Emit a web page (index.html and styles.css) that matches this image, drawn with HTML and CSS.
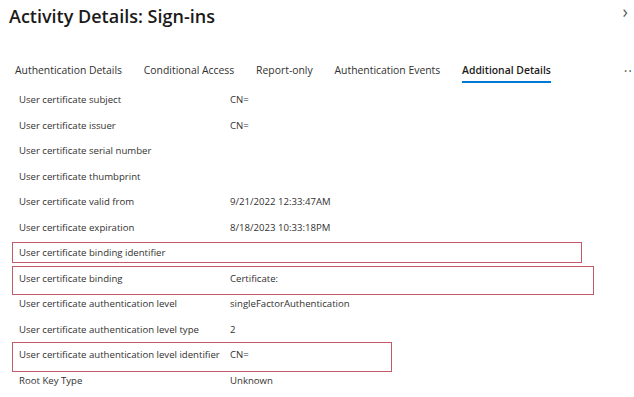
FILE: index.html
```html
<!DOCTYPE html>
<html lang="en">
<head>
  <meta charset="UTF-8">
  <title>Activity Details: Sign-ins</title>
  <link rel="stylesheet" href="styles.css">
</head>
<body>
  <header class="panel-header">
    <h1>Activity Details: Sign-ins</h1>
    <span class="close-chevron">&#x203A;</span>
  </header>

  <nav class="tab-bar">
    <a class="tab">Authentication Details</a>
    <a class="tab">Conditional Access</a>
    <a class="tab">Report-only</a>
    <a class="tab">Authentication Events</a>
    <a class="tab active">Additional Details</a>
    <span class="more">&middot;&middot;</span>
  </nav>

  <main class="detail-list">
    <div class="row"><span class="label">User certificate subject</span><span class="value">CN=</span></div>
    <div class="row"><span class="label">User certificate issuer</span><span class="value">CN=</span></div>
    <div class="row"><span class="label">User certificate serial number</span><span class="value"></span></div>
    <div class="row"><span class="label">User certificate thumbprint</span><span class="value"></span></div>
    <div class="row"><span class="label">User certificate valid from</span><span class="value">9/21/2022 12:33:47AM</span></div>
    <div class="row"><span class="label">User certificate expiration</span><span class="value">8/18/2023 10:33:18PM</span></div>
    <div class="row mark mark-a"><span class="label">User certificate binding identifier</span><span class="value"></span></div>
    <div class="row mark mark-b"><span class="label">User certificate binding</span><span class="value">Certificate:</span></div>
    <div class="row"><span class="label">User certificate authentication level</span><span class="value">singleFactorAuthentication</span></div>
    <div class="row"><span class="label">User certificate authentication level type</span><span class="value">2</span></div>
    <div class="row mark mark-c"><span class="label">User certificate authentication level identifier</span><span class="value">CN=</span></div>
    <div class="row"><span class="label">Root Key Type</span><span class="value">Unknown</span></div>
  </main>
</body>
</html>
```

FILE: styles.css
```css
/* ===== Base ===== */
:root {
  --text: #323130;
  --heading: #1b1a19;
  --accent: #0078d4;
  --mark: #c25a6a;
}

* {
  margin: 0;
  padding: 0;
  box-sizing: border-box;
}

body {
  width: 634px;
  height: 397px;
  overflow: hidden;
  background: #ffffff;
  color: var(--text);
  font-family: 'Open Sans', 'Noto Sans', sans-serif;
}

/* ===== Header ===== */
.panel-header {
  position: relative;
  height: 52px;
  padding: 3px 9px 0;
}

.panel-header h1 {
  font-size: 18px;
  font-weight: 600;
  color: var(--heading);
  line-height: 26px;
}

.close-chevron {
  position: absolute;
  top: -1px;
  right: 6px;
  font-size: 18px;
  color: #605e5c;
}

/* ===== Tabs ===== */
.tab-bar {
  position: relative;
  display: flex;
  align-items: flex-start;
  gap: 21.8px;
  height: 34px;
  padding: 10px 15px 0;
}

.tab {
  font-size: 10.4px;
  line-height: 16px;
  color: var(--text);
  padding-bottom: 3px;
  border-bottom: 2px solid transparent;
}

.tab.active {
  font-weight: 600;
  color: var(--heading);
  border-bottom-color: var(--accent);
}

.more {
  position: absolute;
  right: 1px;
  top: 9px;
  font-size: 14px;
  color: #605e5c;
  letter-spacing: 1px;
}

/* ===== Detail rows ===== */
.detail-list {
  padding-top: 1px;
}

.row {
  position: relative;
  display: flex;
  align-items: center;
  height: 25.5px;
  padding-left: 19px;
  font-size: 9.6px;
}

.label {
  width: 211px;
  flex-shrink: 0;
}

/* annotation outlines drawn over the rows */
.mark::before {
  content: "";
  position: absolute;
  left: 12px;
  border: 1.5px solid var(--mark);
}

.mark-a::before {
  top: 2px;
  height: 19px;
  width: 568px;
}

.mark-b::before {
  top: 0;
  height: 27px;
  width: 580px;
}

.mark-c::before {
  top: 0;
  height: 28px;
  width: 378px;
}
```
